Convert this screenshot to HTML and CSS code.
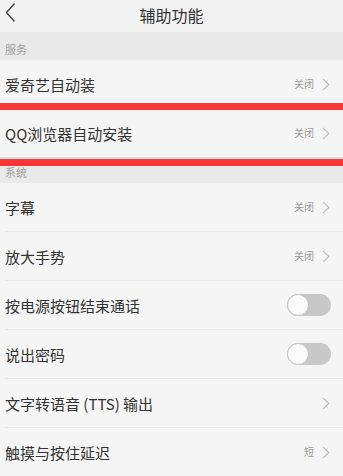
FILE: index.html
```html
<!DOCTYPE html>
<html lang="zh">
<head>
<meta charset="utf-8">
<link rel="stylesheet" href="styles.css">
</head>
<body>
<div class="page">
  <header class="topbar">
    <svg class="back" width="14" height="22" viewBox="0 0 14 22"><path d="M11.5 2.5 L3.5 11.5 L11.5 20.5" fill="none" stroke="#444" stroke-width="1.4"/></svg>
    <div class="title">辅助功能</div>
  </header>
  <div class="section s1">服务</div>
  <div class="row"><span class="label">爱奇艺自动装</span><span class="right"><span class="val">关闭</span><svg class="chev" width="8" height="13" viewBox="0 0 8 13"><path d="M1 0.8 L6.8 6.5 L1 12.2" fill="none" stroke="#bbb" stroke-width="1.1"/></svg></span></div>
  <div class="row last"><span class="label">QQ浏览器自动安装</span><span class="right"><span class="val">关闭</span><svg class="chev" width="8" height="13" viewBox="0 0 8 13"><path d="M1 0.8 L6.8 6.5 L1 12.2" fill="none" stroke="#bbb" stroke-width="1.1"/></svg></span></div>
  <div class="section s2">系统</div>
  <div class="row"><span class="label">字幕</span><span class="right"><span class="val">关闭</span><svg class="chev" width="8" height="13" viewBox="0 0 8 13"><path d="M1 0.8 L6.8 6.5 L1 12.2" fill="none" stroke="#bbb" stroke-width="1.1"/></svg></span></div>
  <div class="row"><span class="label">放大手势</span><span class="right"><span class="val">关闭</span><svg class="chev" width="8" height="13" viewBox="0 0 8 13"><path d="M1 0.8 L6.8 6.5 L1 12.2" fill="none" stroke="#bbb" stroke-width="1.1"/></svg></span></div>
  <div class="row"><span class="label">按电源按钮结束通话</span><span class="toggle"><span class="knob"></span></span></div>
  <div class="row"><span class="label">说出密码</span><span class="toggle"><span class="knob"></span></span></div>
  <div class="row"><span class="label">文字转语音 (TTS) 输出</span><span class="right"><svg class="chev" width="8" height="13" viewBox="0 0 8 13"><path d="M1 0.8 L6.8 6.5 L1 12.2" fill="none" stroke="#bbb" stroke-width="1.1"/></svg></span></div>
  <div class="row"><span class="label">触摸与按住延迟</span><span class="right"><span class="val">短</span><svg class="chev" width="8" height="13" viewBox="0 0 8 13"><path d="M1 0.8 L6.8 6.5 L1 12.2" fill="none" stroke="#bbb" stroke-width="1.1"/></svg></span></div>
  <div class="mark m1"></div>
  <div class="mark m2"></div>
</div>
</body>
</html>
```
FILE: styles.css
```css
html, body {
  margin: 0;
  padding: 0;
  background: #f5f5f5;
}
body {
  font-family: "Noto Sans CJK SC", "Noto Sans", sans-serif;
  color: #333;
}
.page {
  position: relative;
  width: 343px;
  height: 476px;
  overflow: hidden;
}
.topbar {
  height: 32px;
  background: #f2f2f2;
  display: flex;
  align-items: center;
  justify-content: center;
  position: relative;
}
.back {
  position: absolute;
  left: 3px;
  top: 1px;
}
.title {
  font-size: 16px;
  color: #333;
  line-height: 1;
  margin-top: -2px;
}
.section {
  background: #e9e9e9;
  font-size: 11px;
  color: #a0a0a0;
  padding-left: 5px;
  display: flex;
  align-items: flex-end;
  box-sizing: border-box;
  line-height: 1;
}
.s1 {
  height: 28px;
  padding-bottom: 5px;
}
.s2 {
  height: 26px;
  padding-bottom: 5px;
  border-top: 1px solid #dcdcdc;
}
.row {
  height: 49px;
  box-sizing: border-box;
  margin-left: 5px;
  padding-right: 13px;
  border-bottom: 1px solid #e8e8e8;
  display: flex;
  align-items: center;
  justify-content: space-between;
  background: #f5f5f5;
}
.row.last {
  height: 48px;
  border-bottom: none;
}
.label {
  font-size: 15px;
  color: #333;
  line-height: 1;
}
.right {
  display: flex;
  align-items: center;
  gap: 8px;
}
.val {
  font-size: 10px;
  color: #999;
  line-height: 1;
}
.chev {
  display: block;
}
.toggle {
  width: 44px;
  height: 22px;
  border-radius: 11px;
  background: #c8c8c8;
  position: relative;
  margin-right: -1px;
}
.knob {
  position: absolute;
  left: 0;
  top: 0;
  width: 22px;
  height: 22px;
  box-sizing: border-box;
  border-radius: 50%;
  background: #fbfbfb;
  border: 1px solid #c4c4c4;
}
.mark {
  position: absolute;
  left: 0;
  width: 343px;
  height: 7px;
  background: #fe3637;
}
.m1 { top: 103px; }
.m2 { top: 159px; }
```
